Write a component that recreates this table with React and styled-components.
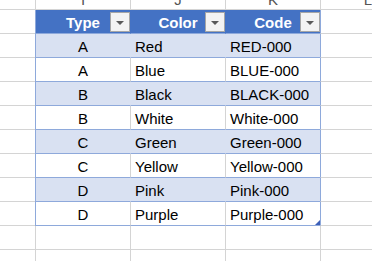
import React from "react";
import styled, { createGlobalStyle } from "styled-components";

const GRID = "#d4d4d4";
const TBORDER = "#8ea9db";
const BAND = "#d9e1f2";
const HEAD = "#4472c4";

const Global = createGlobalStyle`
  html, body { margin: 0; padding: 0; background: #fff; overflow: hidden; }
  body { font-family: "Liberation Sans", Arial, sans-serif; }
`;

const Sheet = styled.div`
  display: flex;
  flex-direction: column;
  width: 372px;
  height: 261px;
  overflow: hidden;
`;

const Row = styled.div`
  display: flex;
  flex: none;
  height: ${(p) => (p.$colHead ? 10 : 24)}px;
`;

const Cell = styled.div`
  position: relative;
  box-sizing: border-box;
  flex: none;
  width: ${(p) => (p.$first ? 35 : 95)}px;
  height: 100%;
  border-left: ${(p) => (p.$first ? "none" : `1px solid ${p.$bl || GRID}`)};
  border-bottom: 1px solid ${(p) => p.$bb || GRID};
  background: ${(p) => p.$bg || "#fff"};
  display: flex;
  align-items: flex-end;
  justify-content: ${(p) => (p.$center ? "center" : "flex-start")};
  padding: 0 0 1px ${(p) => (p.$center ? 0 : 4)}px;
  font-size: 15px;
  line-height: 18px;
  color: ${(p) => (p.$head ? "#fff" : "#000")};
  font-weight: ${(p) => (p.$head ? 700 : 400)};
  white-space: nowrap;
`;

const ColLetterCell = styled.div`
  box-sizing: border-box;
  flex: none;
  width: ${(p) => (p.$first ? 35 : 95)}px;
  height: 10px;
  border-left: ${(p) => (p.$first ? "none" : `1px solid ${GRID}`)};
  border-bottom: 1px solid ${GRID};
  background: #fff;
  overflow: hidden;
  display: flex;
  justify-content: center;
  align-items: flex-end;
`;

const Letter = styled.span`
  font-size: 15px;
  line-height: 15px;
  color: #555;
  margin-bottom: 1px;
  transform: translateY(-1px);
`;

const FilterButton = styled.div`
  position: absolute;
  right: 0;
  top: 2px;
  box-sizing: border-box;
  width: 20px;
  height: 20px;
  background: #f3f3f3;
  border: 1px solid #a6a6a6;
  display: flex;
  align-items: center;
  justify-content: center;
`;

const Caret = styled.span`
  width: 0;
  height: 0;
  border-left: 4px solid transparent;
  border-right: 4px solid transparent;
  border-top: 4px solid #595959;
  margin-top: 1px;
`;

const ResizeHandle = styled.span`
  position: absolute;
  right: 0;
  bottom: 0;
  width: 0;
  height: 0;
  border-left: 5px solid transparent;
  border-bottom: 5px solid #3c5fb8;
`;

const data = [
  ["A", "Red", "RED-000"],
  ["A", "Blue", "BLUE-000"],
  ["B", "Black", "BLACK-000"],
  ["B", "White", "White-000"],
  ["C", "Green", "Green-000"],
  ["C", "Yellow", "Yellow-000"],
  ["D", "Pink", "Pink-000"],
  ["D", "Purple", "Purple-000"],
];

const letters = ["H", "I", "J", "K", "L"];

export default function App() {
  return (
    <>
      <Global />
      <Sheet>
        <Row $colHead>
          {letters.map((l, i) => (
            <ColLetterCell key={l} $first={i === 0}>
              {i > 0 && <Letter>{l}</Letter>}
            </ColLetterCell>
          ))}
        </Row>
        <Row>
          <Cell $first />
          {["Type", "Color", "Code"].map((h, i) => (
            <Cell
              key={h}
              $head
              $center
              $bg={HEAD}
              $bl={i === 0 ? TBORDER : HEAD}
              $bb={TBORDER}
            >
              {h}
              <FilterButton>
                <Caret />
              </FilterButton>
            </Cell>
          ))}
          <Cell $bl={TBORDER} />
        </Row>
        {data.map((r, ri) => {
          const band = ri % 2 === 0;
          const last = ri === data.length - 1;
          return (
            <Row key={ri}>
              <Cell $first />
              {r.map((v, ci) => (
                <Cell
                  key={ci}
                  $center={ci === 0}
                  $bg={band ? BAND : "#fff"}
                  $bl={ci === 0 ? TBORDER : band ? BAND : GRID}
                  $bb={TBORDER}
                >
                  {v}
                  {last && ci === 2 && <ResizeHandle />}
                </Cell>
              ))}
              <Cell $bl={TBORDER} />
            </Row>
          );
        })}
        {[0, 1].map((k) => (
          <Row key={"e" + k}>
            <Cell $first />
            <Cell />
            <Cell />
            <Cell />
            <Cell />
          </Row>
        ))}
      </Sheet>
    </>
  );
}
